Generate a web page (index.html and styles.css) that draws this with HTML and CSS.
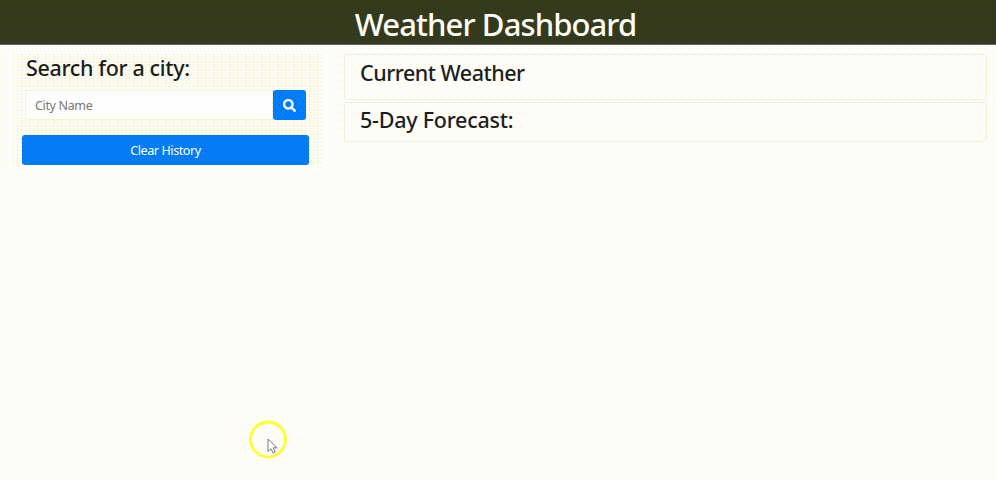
FILE: index.html
```html
<!DOCTYPE html>
<html lang="en">
<head>
<meta charset="utf-8">
<title>Weather Dashboard</title>
<link rel="stylesheet" href="styles.css">
</head>
<body>
<header class="header"><h1>Weather Dashboard</h1></header>
<main class="layout">
  <aside class="sidebar">
    <h2>Search for a city:</h2>
    <form class="search">
      <input type="text" placeholder="City Name" aria-label="City Name">
      <button class="btn search-btn" type="button" aria-label="Search">
        <svg viewBox="0 0 512 512" width="13" height="13"><path fill="currentColor" stroke="currentColor" stroke-width="16" d="M505 442.700 405.300 343c-4.500-4.500-10.600-7-17-7H372c27.600-35.300 44-79.700 44-128C416 93.100 322.900 0 208 0S0 93.100 0 208s93.100 208 208 208c48.300 0 92.700-16.400 128-44v16.300c0 6.400 2.500 12.500 7 17l99.700 99.700c9.400 9.400 24.600 9.400 33.900 0l28.300-28.300c9.400-9.400 9.400-24.600.1-34zM208 336c-70.700 0-128-57.200-128-128 0-70.700 57.200-128 128-128 70.700 0 128 57.200 128 128 0 70.700-57.200 128-128 128z"/></svg>
      </button>
    </form>
    <button class="btn clear-btn" type="button">Clear History</button>
  </aside>
  <div class="results">
    <section class="card current"><h2>Current Weather</h2></section>
    <section class="card forecast"><h2>5-Day Forecast:</h2></section>
  </div>
</main>
<div class="pointer">
  <svg viewBox="0 0 40 40" width="40" height="40"><circle cx="20" cy="19.500" r="17.500" fill="none" stroke="#ffff2b" stroke-width="2.800"/><path d="M20 19v12.500l3-2.800 2 4.300 2.200-1-2-4.200h4z" fill="#fff" stroke="#777788" stroke-width="1"/></svg>
</div>
</body>
</html>
```
FILE: styles.css
```css
* { box-sizing: border-box; }
body {
  margin: 0;
  height: 480px;
  overflow: hidden;
  background-color: #fdfdff;
  background-image: conic-gradient(at 1px 1px, transparent 75%, #ffff99 0), conic-gradient(at 1px 1px, transparent 75%, #ffff99 0);
  background-size: 8px 8px;
  background-position: 0 0, 4px 4px;
  color: #1b1e20;
  font-family: "Noto Sans", "Open Sans", sans-serif;
}
h1, h2 { margin: 0; font-weight: 500; white-space: nowrap; }
.header {
  height: 45px;
  border-bottom: 1px solid #666650;
  background-color: #333333;
  background-image:
    conic-gradient(at 1px 1px, transparent 75%, #334d00 0),
    conic-gradient(at 1px 1px, transparent 75%, #333a00 0),
    conic-gradient(at 1px 1px, transparent 75%, #333366 0);
  background-size: 4px 4px, 2px 2px, 2px 2px;
  background-position: 0 0, 0 0, 1px 1px;
  color: #fff;
  text-align: center;
}
h1 { padding-right: 5px; font-size: 31px; line-height: 49px; letter-spacing: -0.9px; }
h2 { font-size: 21.5px; line-height: 26px; letter-spacing: -0.35px; }
.layout { display: flex; padding: 9px 9px 0 12px; }
.sidebar {
  width: 310px;
  height: 112px;
  margin-right: 22px;
  padding: 1px 13px 0 10px;
  background-color: #fdfdff;
  background-image: conic-gradient(at 1px 1px, transparent 75%, #d4d4ff 0), conic-gradient(at 1px 1px, transparent 75%, #ffff99 0);
  background-size: 4px 4px;
  background-position: 1px 0, 2px 2px;
}
.sidebar h2 { padding-left: 4px; }
.search { display: flex; margin: 9px 3px 15px; }
input {
  flex: 1;
  min-width: 0;
  height: 30px;
  padding: 0 9px;
  border: 1px dotted #e6e6b8;
  border-radius: 4px 0 0 4px;
  background: #fdfdfd;
  font: 12.5px "Noto Sans", sans-serif;
  letter-spacing: -0.35px;
}
input::placeholder { color: #77796b; opacity: 1; }
.btn {
  padding: 0;
  border: 0;
  border-radius: 3px;
  background-color: #0080ff;
  background-image: conic-gradient(at 1px 1px, transparent 75%, #0066cc 0), conic-gradient(at 1px 1px, transparent 75%, #0066cc 0);
  background-size: 4px 4px;
  background-position: 0 0, 2px 2px;
  color: #fff;
  font: 12.5px "Noto Sans", sans-serif;
  letter-spacing: -0.4px;
}
.search-btn { display: flex; align-items: center; justify-content: center; width: 33px; height: 30px; }
.clear-btn { display: block; width: 287px; height: 30px; }
.results { flex: 1; }
.card { border: 1px dotted #e6e6a0; border-radius: 3px; padding-left: 15px; }
.current { height: 46px; padding-top: 5px; margin-bottom: 2px; }
.current h2 { letter-spacing: -0.5px; }
.forecast { height: 40px; padding-top: 4px; }
.forecast h2 { letter-spacing: -0.25px; }
.pointer { position: absolute; left: 248px; top: 420px; width: 40px; height: 40px; }
```
